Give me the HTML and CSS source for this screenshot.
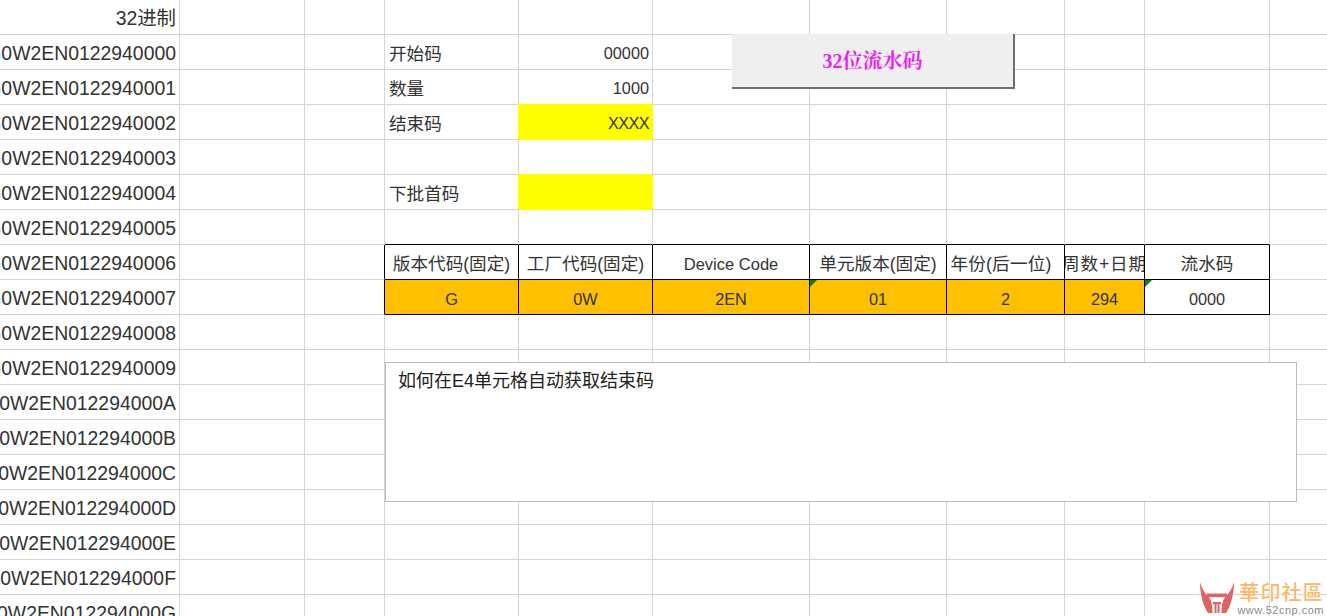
FILE: index.html
```html
<!DOCTYPE html>
<html lang="zh-CN">
<head>
<meta charset="utf-8">
<title>32位流水码</title>
<link rel="stylesheet" href="styles.css">
</head>
<body>
<div class="sheet">
  <div class="grid">
    <!-- row 1 -->
    <div class="c a">32进制</div><div class="c"></div><div class="c"></div><div class="c"></div><div class="c"></div><div class="c"></div><div class="c"></div><div class="c"></div><div class="c"></div><div class="c"></div><div class="c"></div>
    <!-- row 2 -->
    <div class="c a">G0W2EN0122940000</div><div class="c"></div><div class="c"></div><div class="c label">开始码</div><div class="c num">00000</div><div class="c"></div><div class="c"></div><div class="c"></div><div class="c"></div><div class="c"></div><div class="c"></div>
    <!-- row 3 -->
    <div class="c a">G0W2EN0122940001</div><div class="c"></div><div class="c"></div><div class="c label">数量</div><div class="c num">1000</div><div class="c"></div><div class="c"></div><div class="c"></div><div class="c"></div><div class="c"></div><div class="c"></div>
    <!-- row 4 -->
    <div class="c a">G0W2EN0122940002</div><div class="c"></div><div class="c"></div><div class="c label">结束码</div><div class="c num yellow tight">XXXX</div><div class="c"></div><div class="c"></div><div class="c"></div><div class="c"></div><div class="c"></div><div class="c"></div>
    <!-- row 5 -->
    <div class="c a">G0W2EN0122940003</div><div class="c"></div><div class="c"></div><div class="c"></div><div class="c"></div><div class="c"></div><div class="c"></div><div class="c"></div><div class="c"></div><div class="c"></div><div class="c"></div>
    <!-- row 6 -->
    <div class="c a">G0W2EN0122940004</div><div class="c"></div><div class="c"></div><div class="c label">下批首码</div><div class="c yellow"></div><div class="c"></div><div class="c"></div><div class="c"></div><div class="c"></div><div class="c"></div><div class="c"></div>
    <!-- row 7 -->
    <div class="c a">G0W2EN0122940005</div><div class="c"></div><div class="c"></div><div class="c bb"></div><div class="c bb"></div><div class="c bb"></div><div class="c bb"></div><div class="c bb"></div><div class="c bb"></div><div class="c bb"></div><div class="c"></div>
    <!-- row 8 -->
    <div class="c a">G0W2EN0122940006</div><div class="c"></div><div class="c br"></div><div class="c head box">版本代码(固定)</div><div class="c head box">工厂代码(固定)</div><div class="c ctr box dev">Device Code</div><div class="c head box">单元版本(固定)</div><div class="c head box year">年份(后一位)</div><div class="c head box clip">周数+日期</div><div class="c head box">流水码</div><div class="c"></div>
    <!-- row 9 -->
    <div class="c a">G0W2EN0122940007</div><div class="c"></div><div class="c br"></div><div class="c ctr box orange">G</div><div class="c ctr box orange">0W</div><div class="c ctr box orange">2EN</div><div class="c ctr box orange flag">01</div><div class="c ctr box orange">2</div><div class="c ctr box orange">294</div><div class="c ctr box flag">0000</div><div class="c"></div>
    <!-- row 10 -->
    <div class="c a">G0W2EN0122940008</div><div class="c"></div><div class="c"></div><div class="c"></div><div class="c"></div><div class="c"></div><div class="c"></div><div class="c"></div><div class="c"></div><div class="c"></div><div class="c"></div>
    <!-- row 11 -->
    <div class="c a">G0W2EN0122940009</div><div class="c"></div><div class="c"></div><div class="c"></div><div class="c"></div><div class="c"></div><div class="c"></div><div class="c"></div><div class="c"></div><div class="c"></div><div class="c"></div>
    <!-- row 12 -->
    <div class="c a">G0W2EN012294000A</div><div class="c"></div><div class="c"></div><div class="c"></div><div class="c"></div><div class="c"></div><div class="c"></div><div class="c"></div><div class="c"></div><div class="c"></div><div class="c"></div>
    <!-- row 13 -->
    <div class="c a">G0W2EN012294000B</div><div class="c"></div><div class="c"></div><div class="c"></div><div class="c"></div><div class="c"></div><div class="c"></div><div class="c"></div><div class="c"></div><div class="c"></div><div class="c"></div>
    <!-- row 14 -->
    <div class="c a">G0W2EN012294000C</div><div class="c"></div><div class="c"></div><div class="c"></div><div class="c"></div><div class="c"></div><div class="c"></div><div class="c"></div><div class="c"></div><div class="c"></div><div class="c"></div>
    <!-- row 15 -->
    <div class="c a">G0W2EN012294000D</div><div class="c"></div><div class="c"></div><div class="c"></div><div class="c"></div><div class="c"></div><div class="c"></div><div class="c"></div><div class="c"></div><div class="c"></div><div class="c"></div>
    <!-- row 16 -->
    <div class="c a">G0W2EN012294000E</div><div class="c"></div><div class="c"></div><div class="c"></div><div class="c"></div><div class="c"></div><div class="c"></div><div class="c"></div><div class="c"></div><div class="c"></div><div class="c"></div>
    <!-- row 17 -->
    <div class="c a">G0W2EN012294000F</div><div class="c"></div><div class="c"></div><div class="c"></div><div class="c"></div><div class="c"></div><div class="c"></div><div class="c"></div><div class="c"></div><div class="c"></div><div class="c"></div>
    <!-- row 18 -->
    <div class="c a">G0W2EN012294000G</div><div class="c"></div><div class="c"></div><div class="c"></div><div class="c"></div><div class="c"></div><div class="c"></div><div class="c"></div><div class="c"></div><div class="c"></div><div class="c"></div>
  </div>

  <button class="macro" type="button">32位流水码</button>
  <div class="note">如何在E4单元格自动获取结束码</div>

  <div class="mark">
    <svg class="mark-logo" viewBox="0 0 41 36" width="41" height="36" aria-hidden="true">
      <g class="mark-halo">
        <path d="M3 2C3 13 6 26 11 33H15.500C15.500 26 14.500 20 11.500 16.500C8 13.500 5 9 3 2Z"/>
        <path d="M37 2C37 13 34 26 29 33H24.500C24.500 26 25.500 20 28.500 16.500C32 13.500 35 9 37 2Z"/>
        <path d="M10 13.500H30V17H10Z"/>
      </g>
      <g class="mark-red">
        <path d="M3 2C3 13 6 26 11 33H15.500C15.500 26 14.500 20 11.500 16.500C8 13.500 5 9 3 2Z"/>
        <path d="M37 2C37 13 34 26 29 33H24.500C24.500 26 25.500 20 28.500 16.500C32 13.500 35 9 37 2Z"/>
        <path d="M10 13.500H30V17H10Z"/>
        <path d="M16 22H24V24H16Z"/>
        <path d="M17.500 24H19.500V33H17.500Z"/>
        <path d="M20.500 24H22.500V33H20.500Z"/>
      </g>
    </svg>
    <div class="mark-text">
      <span class="mark-name">華印社區</span>
      <span class="mark-url">www.52cnp.com</span>
    </div>
  </div>
</div>
</body>
</html>
```

FILE: styles.css
```css
html, body {
  margin: 0;
  padding: 0;
  background: #fff;
}

.sheet {
  position: relative;
  width: 1327px;
  height: 616px;
  overflow: hidden;
  font-family: "Liberation Sans", "Noto Sans CJK SC", sans-serif;
  color: #333;
}

.grid {
  display: grid;
  grid-template-columns: 180px 125px 80px 134px 134px 157px 137px 118px 80px 125px 58px;
  grid-auto-rows: 35px;
  width: 1328px;
}

.c {
  position: relative;
  box-sizing: border-box;
  display: flex;
  align-items: center;
  min-width: 0;
  white-space: nowrap;
  border-right: 1px solid #d4d4d4;
  border-bottom: 1px solid #d4d4d4;
  font-size: 16.3px;
  line-height: 20px;
}

.a {
  justify-content: flex-end;
  padding-top: 2px;
  padding-right: 3px;
  font-size: 19.4px;
}

.label {
  padding-left: 4px;
  padding-top: 4px;
  font-size: 17.6px;
}

.num {
  justify-content: flex-end;
  padding-right: 3px;
  padding-top: 2px;
}

.tight {
  padding-right: 3px;
  letter-spacing: -0.6px;
}

.yellow {
  background: #ffff00;
  border-color: #ffff00;
  box-shadow: -1px -1px 0 #ffff00;
}

.bb {
  border-bottom-color: #000;
}

.br {
  border-right-color: #000;
}

.box {
  border-color: #000;
  padding-top: 3px;
}

.head,
.ctr {
  justify-content: center;
}

.head {
  font-size: 17.6px;
  overflow: hidden;
}

.dev {
  font-size: 16.5px;
}

.year {
  padding-right: 9px;
  letter-spacing: 0.2px;
}

.clip {
  letter-spacing: 0.9px;
}

.orange {
  background: #ffc000;
}

.flag::before {
  content: "";
  position: absolute;
  top: 0;
  left: 0;
  border-top: 7px solid #137c13;
  border-right: 7px solid transparent;
}

.macro {
  position: absolute;
  left: 732px;
  top: 34px;
  box-sizing: border-box;
  width: 283px;
  height: 55px;
  padding: 0;
  background: #efefef;
  border: 0;
  border-right: 2px solid #6f6f6f;
  border-bottom: 2px solid #6f6f6f;
  border-radius: 0;
  color: #f01ff0;
  font-family: "Liberation Serif", "Noto Serif CJK SC", "Noto Sans CJK SC", serif;
  font-size: 20px;
  font-weight: 700;
  line-height: 52px;
}

.note {
  position: absolute;
  left: 385px;
  top: 362px;
  box-sizing: border-box;
  width: 912px;
  height: 140px;
  padding: 8px 12px;
  background: #fff;
  border: 1px solid #bcbcbc;
  color: #222;
  font-size: 18px;
  line-height: 20px;
}

.mark {
  position: absolute;
  left: 1197px;
  top: 580px;
  display: flex;
}

.mark-logo {
  display: block;
  flex: none;
}

.mark-halo path {
  fill: #fff;
  stroke: #fff;
  stroke-width: 3;
  opacity: 0.8;
}

.mark-red path {
  fill: #e06262;
}

.mark-text {
  display: flex;
  flex-direction: column;
  align-items: flex-end;
  width: 86px;
}

.mark-name {
  color: #fbb965;
  font-family: "Noto Sans CJK TC", sans-serif;
  font-size: 20px;
  font-weight: 500;
  letter-spacing: 1.2px;
  line-height: 24px;
  white-space: nowrap;
  text-shadow: 0 0 2px #fff, 0 0 2px #fff;
}

.mark-url {
  color: #8a8a8a;
  font-size: 11px;
  line-height: 12px;
  letter-spacing: 0.5px;
  white-space: nowrap;
  text-shadow: 0 0 2px #fff;
}
```
